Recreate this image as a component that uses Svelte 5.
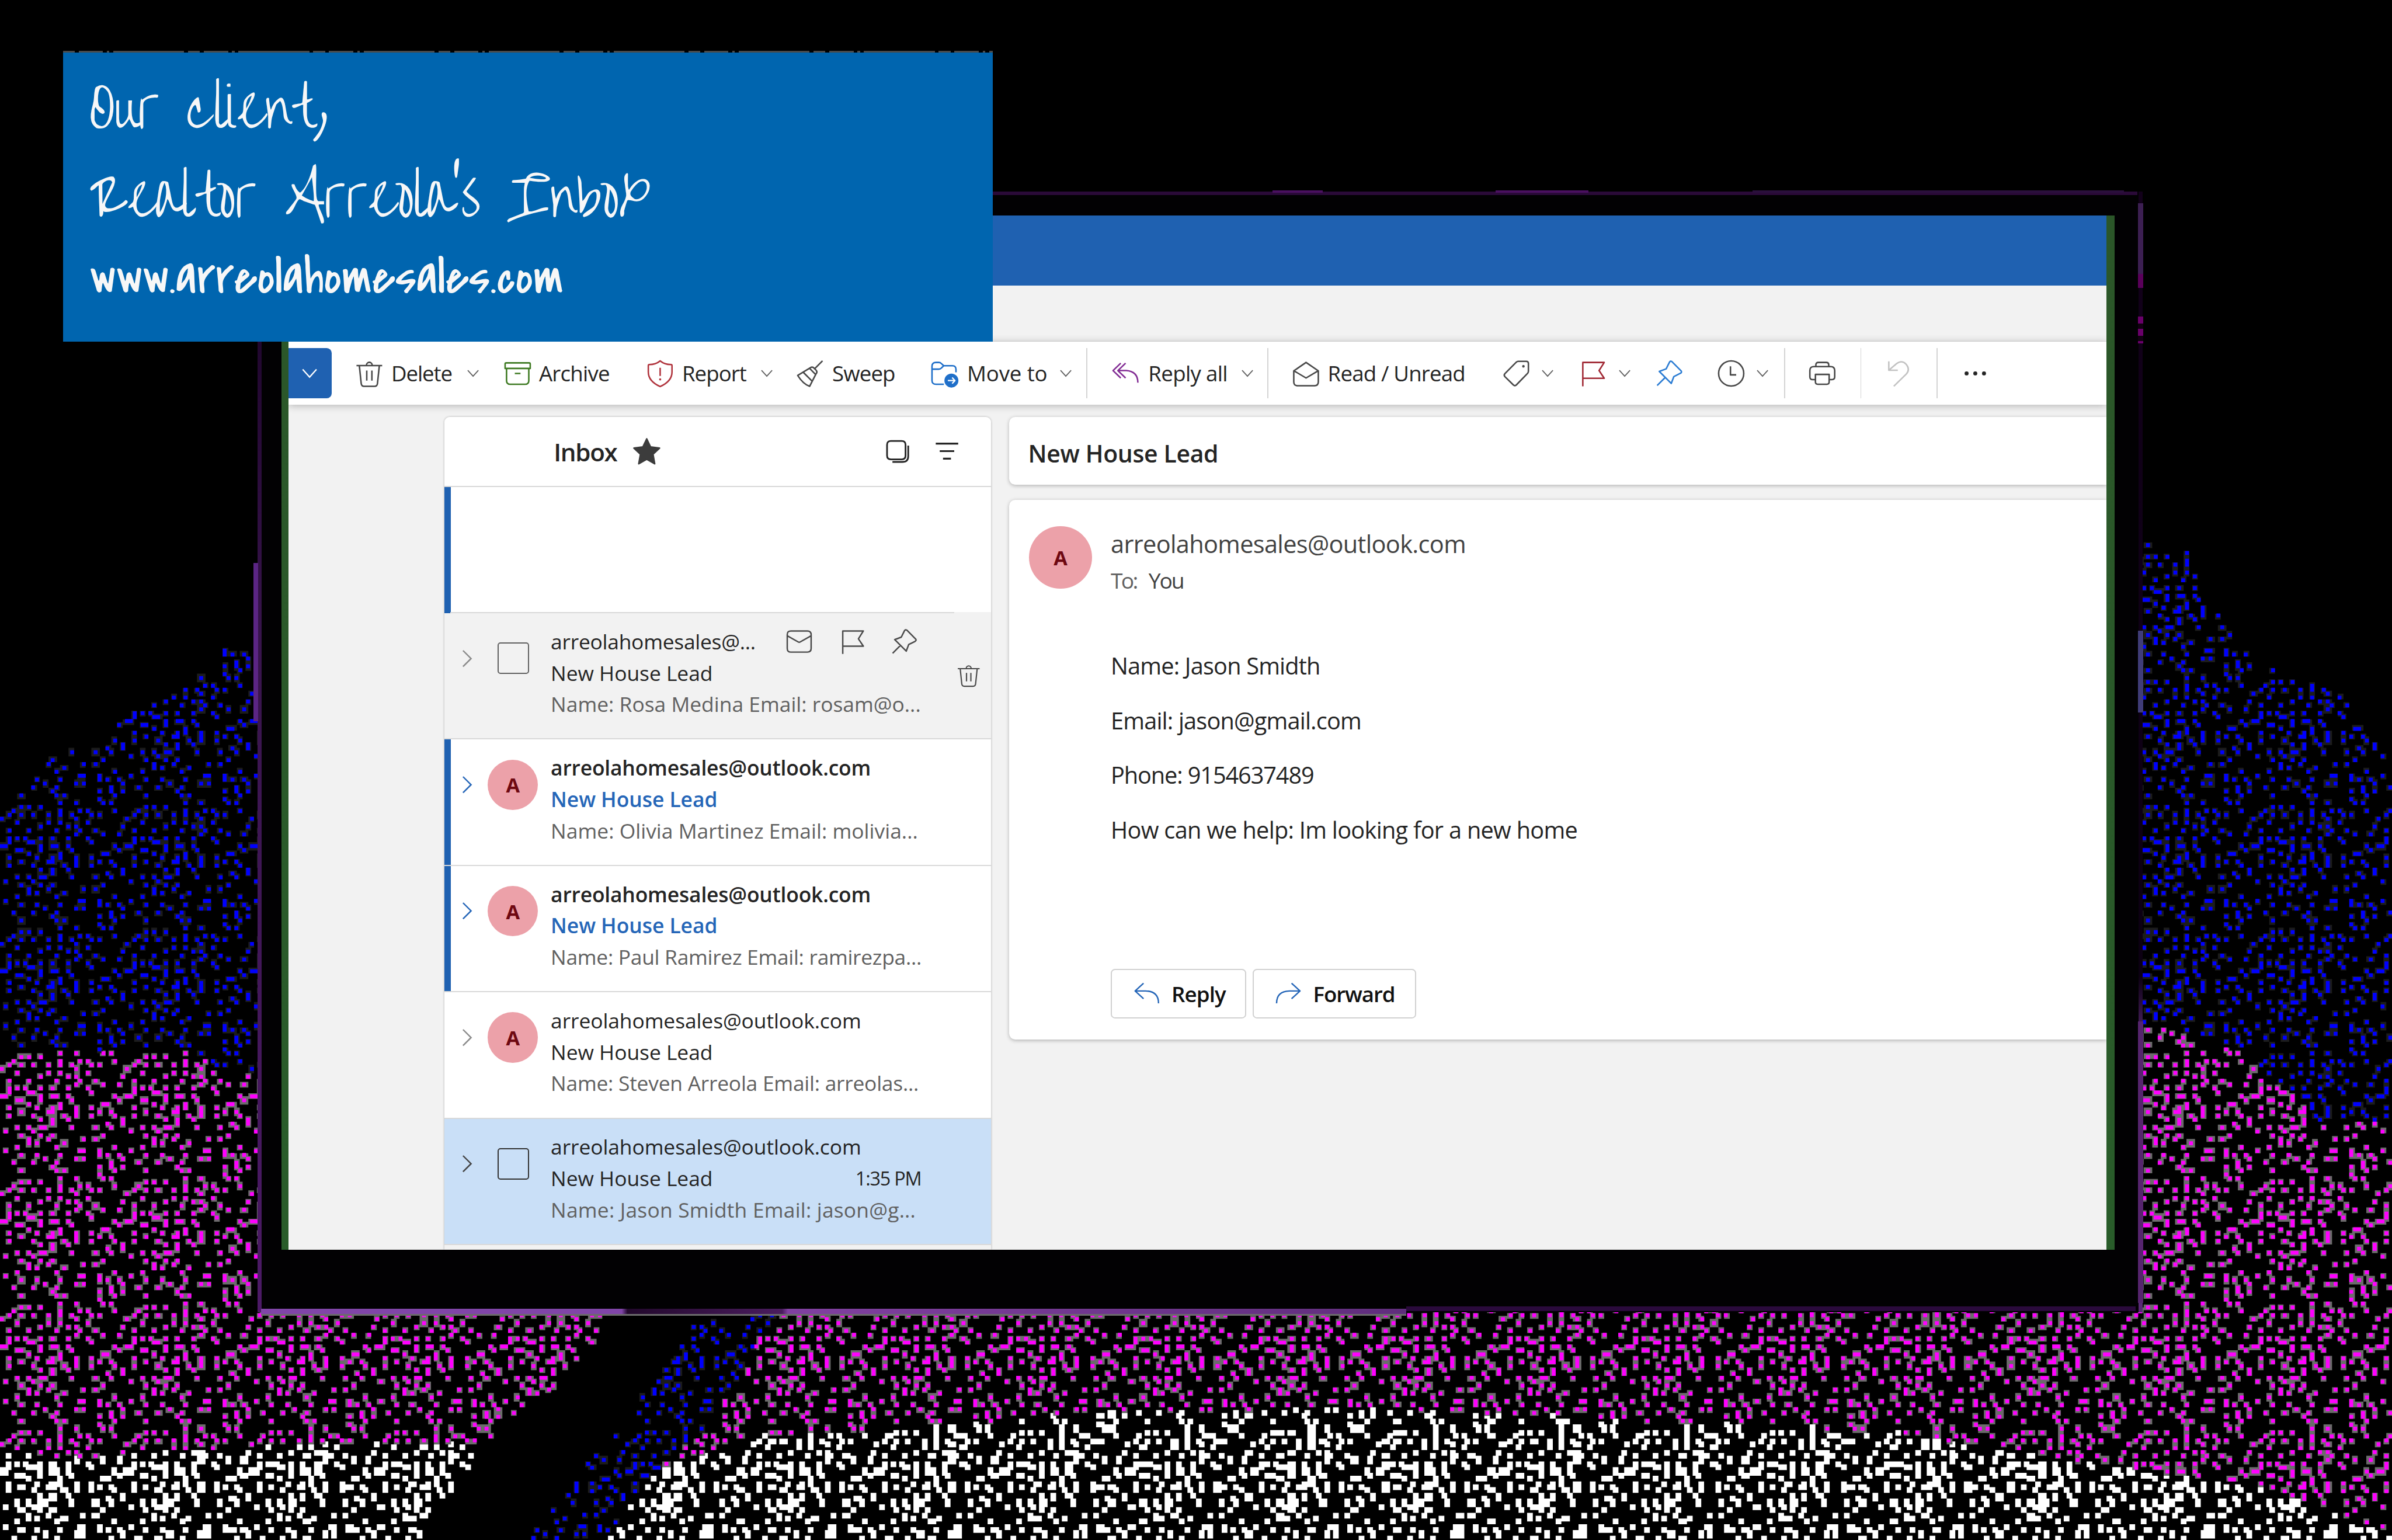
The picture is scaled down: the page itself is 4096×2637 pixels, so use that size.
<script>
  import { onMount } from 'svelte';

  // Layout is authored on a 6704-unit wide canvas; 1rem equals 100 units.
  const SCALE = 4096 / 6704;
  let canvas;

  // Spreads letters so a line of text fills the given width (in canvas units).
  function fit(node, width) {
    const natural = node.getBoundingClientRect().width;
    const count = node.textContent.length;
    node.style.letterSpacing = (width * SCALE - natural) / count + 'px';
  }

  // 32 x 32 repeating dither tile: filled columns for every row.
  const tile = [
    [15, 19, 26, 28], [5, 7, 10], [3, 15, 20, 22, 29], [2, 5, 8, 12, 15, 18, 23, 25],
    [0, 19], [4, 12, 15, 22], [10, 17, 19, 31], [2, 7, 14, 20, 24],
    [19, 26, 30], [2, 4, 6, 10, 13, 17, 22], [2, 7, 8, 23], [0, 1, 10, 13, 14, 17, 29],
    [4, 5, 10, 18, 30], [7, 15, 26, 27], [2, 9, 13, 15, 19, 23], [5, 12, 13, 19, 25, 28],
    [2, 8, 16, 19, 23, 29], [10, 13, 17, 31], [13, 27, 31], [4, 7, 10, 11, 18, 24, 28],
    [1, 8], [5, 10, 13, 26], [7, 12, 21, 24], [7, 9, 16],
    [4, 14, 29], [1, 20, 21, 25], [5, 9, 15, 25, 27, 30], [11, 19, 21, 31],
    [3, 8, 14, 28], [13, 25, 28, 31], [5, 14, 16, 29], [25]
  ];
  const CELL = 350.6 / 32;
  const TOP = 3297.2 - 350.6 * 8;

  const blueTop = [[0, 2262], [138, 2117], [310, 2070], [344, 2012], [425, 1970], [520, 1922], [626, 1812], [730, 1815], [900, 1815], [5990, 1505], [6135, 1535], [6167, 1665], [6238, 1740], [6302, 1845], [6423, 1895], [6564, 1940], [6622, 2020], [6704, 2105]];
  const pinkTop = [[0, 2960], [120, 2945], [520, 2938], [600, 2985], [730, 3000], [900, 3000], [5990, 2865], [6148, 2905], [6276, 2950], [6372, 3020], [6462, 3095], [6510, 3150], [6704, 3140]];
  const whiteTop = [[0, 4074], [220, 4086], [520, 4062], [900, 4044], [1300, 4044], [1700, 4180], [1940, 4085], [2130, 4025], [2560, 4010], [2740, 3985], [3074, 3958], [3500, 3952], [3850, 3942], [4275, 3967], [4700, 3985], [5304, 4012], [5510, 4045], [5850, 4100], [6000, 4118], [6200, 4140], [6300, 4165], [6420, 4195], [6600, 4262], [6704, 4310]];
  // Edges of the dark diagonal streak, as x positions by depth.
  const darkLeft = [[3680, 1698], [3739, 1690], [3817, 1610], [3937, 1505], [4046, 1365], [4156, 1285], [4316, 1165]];
  const blueLeft = [[3680, 2060], [3720, 1935], [3810, 1890], [3895, 1800], [4000, 1730], [4110, 1640], [4220, 1560], [4316, 1480]];
  const blueRight = [[3680, 2180], [3760, 2115], [3880, 2060], [3990, 1980], [4080, 1890], [4150, 1815], [4316, 1708]];

  function at(line, v) {
    for (let i = 1; i < line.length; i++) {
      const [a, p] = line[i - 1];
      const [b, q] = line[i];
      if (v <= b) return p + ((q - p) * (v - a)) / (b - a);
    }
    return line[line.length - 1][1];
  }

  function zone(x, y) {
    if (y > 3660 && x > at(darkLeft, y) && x < at(blueRight, y)) {
      return x > at(blueLeft, y) ? 'blue' : null;
    }
    if (y > at(whiteTop, x)) return 'white';
    if (y > at(pinkTop, x)) return 'pink';
    if (y > at(blueTop, x)) return 'blue';
    return null;
  }

  onMount(() => {
    const ctx = canvas.getContext('2d');
    ctx.scale(SCALE, SCALE);
    const halo = { blue: new Path2D(), pink: new Path2D(), white: new Path2D() };
    const core = { blue: new Path2D(), pink: new Path2D(), white: new Path2D() };
    const used = new Set();
    for (let r = 0; TOP + r * CELL < 4316; r++) {
      const y = TOP + r * CELL;
      for (let k = 0; k < 20; k++) {
        for (const c of tile[r % 32]) {
          const x = (k * 32 + c) * CELL - 0.4;
          const z = zone(x + 5, y + 5);
          if (!z) continue;
          core[z].rect(x, y, CELL, CELL);
          const x0 = Math.floor((x + 0.8) / 8), x1 = Math.ceil((x + CELL - 0.8) / 8);
          const y0 = Math.floor((y + 0.8) / 8), y1 = Math.ceil((y + CELL - 0.8) / 8);
          for (let j = y0; j < y1; j++) {
            for (let i = x0; i < x1; i++) {
              const key = j * 1000 + i;
              if (used.has(key)) continue;
              used.add(key);
              halo[z].rect(i * 8, j * 8, 8, 8);
            }
          }
        }
      }
    }
    const paint = (path, color) => { ctx.fillStyle = color; ctx.fill(path); };
    paint(halo.blue, '#1c1c1c');
    paint(halo.pink, '#6b6b6b');
    paint(halo.white, '#fff');
    paint(core.blue, '#0000ff');
    paint(core.pink, '#ff00ff');
  });

  const tools = [
    { icon: 'trash', lead: 66, w: 80, text: 'Delete', gap: 21, tw: 170, chev: 43 },
    { icon: 'archive', lead: 68, w: 80, text: 'Archive', gap: 20, tw: 198 },
    { icon: 'shield', lead: 101, w: 80, text: 'Report', gap: 22, tw: 180, chev: 41 },
    { icon: 'broom', lead: 65, w: 80, text: 'Sweep', gap: 22, tw: 176 },
    { icon: 'folder', lead: 99, w: 84, text: 'Move to', gap: 19, tw: 225, chev: 36 },
    { divider: true, lead: 40 },
    { icon: 'replyall', lead: 67, w: 80, text: 'Reply all', gap: 24, tw: 222, chev: 40 },
    { divider: true, lead: 39 },
    { icon: 'envelope', lead: 65, w: 80, text: 'Read / Unread', gap: 21, tw: 385 },
    { icon: 'tag', lead: 104, w: 80, chev: 30 },
    { icon: 'flag', lead: 72, w: 80, chev: 32 },
    { icon: 'pin', lead: 68, w: 80, chev: 0 },
    { icon: 'clock', lead: 94, w: 80, chev: 31 },
    { divider: true, lead: 44 },
    { icon: 'printer', lead: 64, w: 80 },
    { divider: true, lead: 67 },
    { icon: 'undo', lead: 64, w: 80 },
    { divider: true, lead: 67 },
    { icon: 'dots', lead: 65, w: 80 }
  ];

  const rows = [
    { hover: true, from: 'arreolahomesales@...', fw: 574, sw: 454, snippet: 'Name: Rosa Medina Email: rosam@o...', nw: 1037 },
    { unread: true, from: 'arreolahomesales@outlook.com', fw: 897, sw: 467, snippet: 'Name: Olivia Martinez Email: molivia...', nw: 1029 },
    { unread: true, from: 'arreolahomesales@outlook.com', fw: 897, sw: 467, snippet: 'Name: Paul Ramirez Email: ramirezpa...', nw: 1039 },
    { from: 'arreolahomesales@outlook.com', fw: 870, sw: 454, snippet: 'Name: Steven Arreola Email: arreolas...', nw: 1031 },
    { selected: true, from: 'arreolahomesales@outlook.com', fw: 870, sw: 454, snippet: 'Name: Jason Smidth Email: jason@g...', nw: 1023, time: '1:35 PM' }
  ];

  const body = [
    ['Name: Jason Smidth', 587],
    ['Email: jason@gmail.com', 702],
    ['Phone: 9154637489', 569],
    ['How can we help: Im looking for a new home', 1308]
  ];
</script>

{#snippet icon(name)}
  <svg class="ic {name}" viewBox="0 0 20 20" fill="none" stroke="currentColor" stroke-width="1.05" stroke-linejoin="round">
    {#if name === 'trash'}
      <path d="M1 4.5H19M8 4.2A2 2 0 0 1 12 4.2M3 4.6 4.3 17Q4.5 19 6.3 19H13.700Q15.500 19 15.700 17L17 4.600M8.200 8V15M11.800 8V15" />
    {:else if name === 'archive'}
      <path d="M2 2.600H18Q18.800 2.600 18.800 3.400V6.500H1.200V3.400Q1.200 2.600 2 2.600ZM2.200 6.700V15Q2.200 17.600 4.800 17.600H15.200Q17.800 17.600 17.800 15V6.700M8 10H12" />
    {:else if name === 'shield'}
      <path d="M10 1.200Q13 3.700 17.600 3.800Q18.300 3.800 18.300 4.600V9Q18.300 15.500 10 19.200Q1.700 15.500 1.700 9V4.600Q1.700 3.800 2.400 3.800Q7 3.700 10 1.200ZM10 6V11.800" />
      <circle cx="10" cy="14.200" r=".5" fill="currentColor" stroke-width=".5" />
    {:else if name === 'broom'}
      <path d="M18.600 1.200 12.700 7.100M9.800 6.200Q11.300 4.900 12.700 6.300L14 7.600Q15.300 9 14 10.400L9.600 19Q5 17.500 1.200 11.400ZM9.600 6.500 14 11M5.200 9.300 11.200 15.300" />
    {:else if name === 'folder'}
      <path d="M9.500 17.600H4Q1.200 17.600 1.200 15V5Q1.200 2.300 4 2.300H6Q7 2.300 7.700 3L9.400 4.600H15.500Q18 4.600 18 7.200V9.200M1.200 7H6Q7 7 7.700 6.300L9.400 4.600" />
      <circle cx="14.800" cy="15" r="4.900" fill="currentColor" stroke="none" />
      <path d="M12.300 15H17.200M15.300 12.900 17.300 15 15.300 17.100" stroke="#fff" stroke-width=".9" />
    {:else if name === 'replyall'}
      <path d="M6.600 2.800 1.200 8 6.600 13.200M10 2.800 4.600 8 10 13.200M4.600 8H10.500Q18.600 8.600 18.600 16.500" />
    {:else if name === 'envelope'}
      <path d="M1.400 8.200 10 2.300 18.600 8.200V16Q18.600 18.600 16 18.600H4Q1.400 18.600 1.400 16ZM1.600 8.200 10 13.200 18.400 8.200" />
    {:else if name === 'tag'}
      <path d="M11.300 1.500H17Q18.500 1.500 18.500 3V8.400Q18.500 9.300 17.900 10L10 18.100Q9 19 8 18.100L2 12.200Q1.100 11.200 2 10.200L10 2.100Q10.600 1.500 11.300 1.500Z" />
      <circle cx="15" cy="5" r=".6" fill="currentColor" stroke-width=".6" />
    {:else if name === 'flag'}
      <path d="M2.600 19V2.300H17.600L14 8 17.600 13.400H2.600" />
    {:else if name === 'pin'}
      <path d="M11.800 1.700 18.300 8.200Q19 9.200 17.800 9.900L13.200 12.200 11.400 17 3 8.600 7.800 6.800 10.100 2.200Q10.800 1 11.800 1.700ZM7.200 12.800 1.500 18.500" />
    {:else if name === 'clock'}
      <circle cx="10" cy="10" r="8.800" />
      <path d="M9.500 5V11H13.500" />
    {:else if name === 'printer'}
      <path d="M5.500 5.200V4Q5.500 2.300 7.200 2.300H12.800Q14.500 2.300 14.500 4V5.200M5.200 14.300H3.200Q1.300 14.300 1.300 12.400V8Q1.300 5.200 4.100 5.200H15.900Q18.700 5.200 18.700 8V12.400Q18.700 14.300 16.800 14.300H14.800M5.200 10.700H14.800V16Q14.800 17.600 13.200 17.600H6.800Q5.200 17.600 5.200 16Z" />
    {:else if name === 'undo'}
      <path d="M3 1.500V7.800H9.300M3.200 7.600 8.400 3.200Q12 .4 15 3.400Q18.200 7 15.300 10.400L6.500 19" />
    {:else if name === 'dots'}
      <g fill="currentColor" stroke="none"><circle cx="3.900" cy="10" r="1.400" /><circle cx="10" cy="10" r="1.400" /><circle cx="16.100" cy="10" r="1.400" /></g>
    {:else if name === 'mail'}
      <path d="M4 2.300H16Q18.700 2.300 18.700 5V15Q18.700 17.700 16 17.700H4Q1.300 17.700 1.300 15V5Q1.300 2.300 4 2.300ZM1.300 5.800 9.300 10.300Q10 10.700 10.700 10.300L18.700 5.800" />
    {:else if name === 'star'}
      <path fill="currentColor" d="M10 1 12.700 6.700 19 7.500 14.400 11.800 15.600 18.500 10 15.300 4.400 18.500 5.600 11.800 1 7.500 7.300 6.700Z" />
    {:else if name === 'select'}
      <path stroke-width="1.300" d="M4.800 1.900H13.200Q16.200 1.900 16.200 4.900V13.200Q16.200 16.200 13.200 16.200H4.800Q1.800 16.200 1.800 13.200V4.900Q1.800 1.900 4.800 1.900ZM18.300 5.500V13.600Q18.300 18.200 13.700 18.200H6" />
    {:else if name === 'filter'}
      <path stroke-width="1.400" d="M1.500 3.800H18.500M4.500 9.500H15.500M7 15.200H13" />
    {:else if name === 'reply'}
      <path d="M7.500 2 1.200 7.800 7.500 13.600M1.400 7.800H9Q18.700 8 18.700 17" />
    {:else if name === 'forward'}
      <path d="M12.500 2 18.800 7.800 12.500 13.600M18.600 7.800H11Q1.300 8 1.300 17" />
    {/if}
  </svg>
{/snippet}

{#snippet chevron(dir)}
  <svg class="chev {dir}" viewBox="0 0 20 20" fill="none" stroke="currentColor" stroke-width="1.800"><path d={dir === 'next' ? 'M5 0 15 10 5 20' : 'M1 5 10 15 19 5'} /></svg>
{/snippet}

<div class="stage">
  <canvas bind:this={canvas} width="4096" height="2637"></canvas>

  <div class="monitor">
    <i class="edge top"></i><i class="edge left"></i><i class="edge leftglow"></i><i class="edge right"></i>
    <i class="edge bottom"></i><i class="edge bottomdark"></i>
    <i class="edge r1"></i><i class="edge r2"></i><i class="edge r3"></i><i class="edge r4"></i><i class="edge r5"></i>
    <i class="edge t1"></i><i class="edge t2"></i><i class="edge t3"></i>
    <div class="screen">
      <div class="appbar"></div>
      <div class="tabs"></div>
      <div class="toolbar">
        <div class="new">{@render chevron('down')}</div>
        {#each tools as t}
          {#if t.divider}
            <span class="divider" style:margin-left="{t.lead / 100}rem"></span>
          {:else}
            <span class="tool" style:margin-left="{t.lead / 100}rem">
              <span class="slot tone-{t.icon}" style:width="{t.w / 100}rem">{@render icon(t.icon)}</span>
              {#if t.text}
                <span class="label" style:width="{t.tw / 100}rem" style:margin-left="{t.gap / 100}rem"><span use:fit={t.tw}>{t.text}</span></span>
              {/if}
              {#if t.chev}
                <span class="drop" style:margin-left="{t.chev / 100}rem">{@render chevron('down')}</span>
              {/if}
            </span>
          {/if}
        {/each}
      </div>
      <div class="work">
        <section class="list">
          <header>
            <span class="title"><span use:fit={177}>Inbox</span></span>
            {@render icon('star')}
            <span class="grow"></span>
            {@render icon('select')}
            {@render icon('filter')}
          </header>
          <div class="row blank unread"></div>
          {#each rows as r}
            <div class="row" class:unread={r.unread} class:hover={r.hover} class:selected={r.selected}>
              <span class="expand">{@render chevron('next')}</span>
              <span class="who">
                {#if r.hover || r.selected}<span class="check"></span>{:else}<span class="avatar">A</span>{/if}
              </span>
              <div class="lines">
                <div class="line from">
                  <span use:fit={r.fw}>{r.from}</span>
                  {#if r.hover}
                    <span class="actions">{@render icon('mail')}{@render icon('flag')}{@render icon('pin')}</span>
                  {/if}
                </div>
                <div class="line subject">
                  <span use:fit={r.sw}>New House Lead</span>
                  {#if r.time}<span class="time"><span use:fit={184}>{r.time}</span></span>{/if}
                </div>
                <div class="line snippet"><span use:fit={r.nw}>{r.snippet}</span></div>
              </div>
              {#if r.hover}<span class="bin">{@render icon('trash')}</span>{/if}
            </div>
          {/each}
        </section>
        <section class="reading">
          <div class="card subjectcard"><span use:fit={533}>New House Lead</span></div>
          <div class="card message">
            <span class="avatar big">A</span>
            <div class="content">
              <div class="sender"><span use:fit={995}>arreolahomesales@outlook.com</span></div>
              <div class="to"><span class="tolabel"><span use:fit={73}>To:</span></span><span use:fit={98}>You</span></div>
              <div class="text">
                {#each body as [line, w]}
                  <p><span use:fit={w}>{line}</span></p>
                {/each}
              </div>
              <div class="buttons">
                <button class="b-reply">{@render icon('reply')}<span use:fit={152}>Reply</span></button>
                <button class="b-forward">{@render icon('forward')}<span use:fit={229}>Forward</span></button>
              </div>
            </div>
          </div>
        </section>
      </div>
    </div>
  </div>

  <div class="banner">
    <div class="hand one"><span use:fit={672}>Our client,</span></div>
    <div class="hand two"><span use:fit={1570}>Realtor Arreola's Inbox</span></div>
    <div class="hand three"><span use:fit={1328}>www.arreolahomesales.com</span></div>
  </div>
</div>

<style>
  :global(html) { font-size: 61.098px; }
  :global(body) { margin: 0; background: #000; overflow: hidden; }
  .stage {
    position: relative; width: 67.04rem; height: 43.16rem; overflow: hidden; background: #000;
    font-family: "Segoe UI", "Open Sans", "Noto Sans", sans-serif; color: #242424; white-space: nowrap;
  }
  canvas { position: absolute; left: 0; top: 0; width: 4096px; height: 2637px; }
  svg { display: block; overflow: visible; flex: none; }
  .ic { width: .8rem; height: .8rem; }
  .chev { width: .33rem; height: .33rem; }
  .chev.next { width: .45rem; height: .45rem; }

  /* Monitor and bezel */
  .monitor {
    position: absolute; left: 7.22rem; top: 5.37rem; width: 52.83rem; height: 31.4rem;
    background: #020103; border-radius: .1rem;
  }
  .edge { position: absolute; }
  .top { left: 0; right: .15rem; top: 0; height: .09rem; background: #2a0a38; }
  .left { left: 0; top: 0; bottom: 0; width: .12rem; background: linear-gradient(#150020, #38144c 40%, #4c1a66); }
  .leftglow { left: -.11rem; top: 10.4rem; width: .12rem; height: 4.45rem; background: #5b2584; }
  .right { right: 0; top: 0; bottom: 0; width: .12rem; background: linear-gradient(#12001a, #0c0012 70%, #4a2060 75%, #5a2a78); }
  .bottom { left: .1rem; width: 32.1rem; bottom: -.1rem; border-bottom: .05rem solid #6b6b6b; box-sizing: border-box; height: .19rem; background: linear-gradient(90deg, #8045a8 0 31.500%, #22082c 32% , #4a1c5e 45.500%, #8040a0 46%, #5f2d7c); }
  .bottomdark { left: 32.2rem; right: .2rem; bottom: .02rem; height: .13rem; background: #2a0a3c; }
  .r1, .r2, .r3, .r4, .r5 { left: 52.7rem; width: .14rem; }
  .r1 { top: .33rem; height: 2rem; background: #3c1f52; }
  .r2 { top: 2.3rem; height: .4rem; background: #5a005a; }
  .r3 { top: 3.5rem; height: .75rem; background: repeating-linear-gradient(#6a006a 0 .2rem, #120012 .2rem .34rem); }
  .r4 { top: 12.3rem; height: 2.3rem; background: #403c78; }
  .r5 { top: 23.25rem; height: 7.9rem; background: #56246e; }
  .t1, .t2, .t3 { top: -.04rem; height: .07rem; background: #4a1060; }
  .t1 { left: 28.45rem; width: 1.4rem; }
  .t2 { left: 34.7rem; width: 2.6rem; }
  .t3 { left: 41.9rem; width: 10.4rem; background: #2a0f3c; }

  .screen {
    position: absolute; left: .67rem; top: .67rem; width: 51.37rem; height: 28.98rem; box-sizing: border-box;
    border: solid; border-width: 0 .24rem 0 .21rem; border-image: linear-gradient(#2b5629, #295c2a) 1;
    background: #f2f2f2; overflow: hidden; display: flex; flex-direction: column;
  }
  .appbar { height: 1.97rem; background: #1f61b1; flex: none; }
  .tabs { height: 1.57rem; box-sizing: border-box; border-bottom: .03rem solid #e2e2e2; flex: none; }
  .toolbar {
    height: 1.76rem; flex: none; background: #fff; display: flex; align-items: center; position: relative;
    box-shadow: 0 .03rem .22rem rgba(0, 0, 0, .28); box-sizing: border-box;
  }
  .new {
    width: 1.21rem; height: 1.4rem; background: #1f61b1; border-radius: 0 .14rem .14rem 0; color: #fff; flex: none;
    display: flex; align-items: center; padding-left: .37rem; box-sizing: border-box;
  }
  .new .chev { width: .43rem; height: .43rem; }
  .tool { display: flex; align-items: center; flex: none; }
  .slot { display: block; flex: none; color: #484848; }
  .label { font-size: .6rem; line-height: .8rem; flex: none; color: #242424; }
  .drop { color: #606060; width: .33rem; }
  .divider { width: .03rem; height: 1.4rem; background: #d4d4d4; flex: none; }
  .tone-archive { color: #3e7a22; }
  .tone-shield { color: #b0333c; }
  .tone-folder { color: #1f6fc9; }
  .tone-replyall { color: #822c94; }
  .tone-flag { color: #a02834; }
  .tone-pin { color: #2b7cd3; }
  .tone-undo { color: #c2c2c2; }
  .tone-dots { color: #242424; }

  .work { flex: 1; display: flex; padding: .34rem 0 0 4.375rem; gap: .515rem; min-height: 0; }

  /* Message list */
  .list {
    width: 15.31rem; flex: none; background: #f2f2f2; border-radius: .15rem .15rem 0 0; overflow: hidden;
    box-shadow: 0 0 .06rem rgba(0, 0, 0, .3);
  }
  .list header {
    height: 1.965rem; box-sizing: border-box; border-bottom: .035rem solid #d8d8d8; background: #fff;
    display: flex; align-items: center; padding: .02rem .86rem 0 3.06rem;
  }
  .title { width: 1.75rem; font-size: .69rem; line-height: 1rem; font-weight: 600; }
  .star { color: #3c3c3c; margin-left: .45rem; }
  .grow { flex: 1; }
  .select { width: .72rem; height: .72rem; margin-right: .66rem; }
  .filter { width: .74rem; height: .74rem; }
  .row {
    height: 3.542rem; box-sizing: border-box; border-bottom: .035rem solid #d9d9d9; background: #fff;
    display: flex; align-items: flex-start; position: relative;
  }
  .row.unread { box-shadow: inset .18rem 0 0 #1f61b1; }
  .row.blank { border-image: linear-gradient(90deg, #1f61b1 0 1.18%, #d9d9d9 1.18% 93.2%, #f2f2f2 93.2%) 1; }
  .row.hover { background: #f2f2f2; }
  .row.selected { background: #c9dff7; }
  .expand { width: 1.21rem; padding: 1.04rem 0 0 .41rem; box-sizing: border-box; color: #8a8a8a; flex: none; }
  .unread .expand { color: #2566b8; }
  .selected .expand { color: #444; }
  .who { width: 1.765rem; flex: none; height: 2.53rem; display: flex; align-items: center; }
  .avatar {
    width: 1.41rem; height: 1.41rem; border-radius: 50%; background: #eca1a9; color: #6e0811; font-weight: 700;
    font-size: .56rem; display: flex; align-items: center; justify-content: center; flex: none;
  }
  .check { width: .88rem; height: .88rem; margin-left: .27rem; box-sizing: border-box; border: .045rem solid #616161; border-radius: .08rem; }
  .selected .check { border-color: #333; }
  .lines { padding-top: .355rem; width: 10.4rem; flex: none; }
  .line { height: .88rem; line-height: .88rem; font-size: .58rem; display: flex; align-items: center; position: relative; }
  .snippet { color: #616161; }
  .unread .from, .unread .subject { font-weight: 600; }
  .unread .subject { color: #2566b8; }
  .time { margin-left: auto; font-size: .53rem; padding-right: .02rem; }
  .actions { margin-left: auto; display: flex; align-items: center; gap: .7rem; padding: 0 .1rem 0 0; color: #4a4a4a; }
  .actions .ic { width: .77rem; height: .77rem; }
  .actions .flag { margin: 0 -.02rem 0 .04rem; }
  .bin { color: #4a4a4a; padding-top: 1.34rem; margin-left: .98rem; }
  .bin .ic { width: .68rem; height: .8rem; }

  /* Reading pane */
  .reading { flex: 1; display: flex; flex-direction: column; gap: .43rem; }
  .card { background: #fff; border-radius: .17rem 0 0 .17rem; box-shadow: 0 .03rem .1rem rgba(0, 0, 0, .25); box-sizing: border-box; }
  .subjectcard { height: 1.9rem; padding-left: .53rem; line-height: 2.03rem; font-size: .67rem; font-weight: 600; }
  .message { height: 15.13rem; display: flex; padding: .73rem 0 0 .56rem; }
  .big { width: 1.76rem; height: 1.76rem; }
  .content { margin-left: .525rem; }
  .sender { height: 1rem; line-height: 1rem; font-size: .68rem; color: #424242; }
  .to { height: 1rem; line-height: 1.05rem; font-size: .61rem; color: #424242; display: flex; }
  .tolabel { width: 1.06rem; color: #616161; }
  .text { padding-top: 1.17rem; height: 9.25rem; }
  p { margin: 0; height: 1.53rem; line-height: 1.53rem; font-size: .65rem; }
  .buttons { display: flex; gap: .18rem; }
  button {
    height: 1.39rem; box-sizing: border-box; border: .04rem solid #d1d1d1; border-radius: .12rem; background: #fff;
    display: flex; align-items: center; font: inherit; font-size: .6rem; font-weight: 600; color: #111; padding: 0 0 0 .6rem; gap: .32rem;
  }
  .b-reply { width: 3.79rem; }
  .b-forward { width: 4.59rem; }
  button .ic { width: .75rem; height: .75rem; color: #2566b8; }

  /* Banner */
  .banner {
    position: absolute; left: 1.77rem; top: 1.47rem; width: 26.05rem; height: 8.1rem; background: #0065af;
    color: #f7f7f7; box-sizing: border-box; padding: .02rem 0 0 .74rem;
  }
  .banner::before {
    content: ""; position: absolute; left: 0; right: 0; top: -.04rem; height: .05rem;
    background: repeating-linear-gradient(90deg, #4a4a4a 0 .33rem, #000 .33rem .44rem, #4a4a4a .44rem 1.12rem, #000 1.12rem 1.23rem, #4a4a4a 1.23rem 1.3rem, #000 1.3rem 1.41rem, #4a4a4a 1.41rem 3.395rem, #000 3.395rem 3.506rem);
  }
  .hand { font-family: "Over the Rainbow", "Reenie Beanie", Lato, sans-serif; }
  .one { font-size: 1.53rem; height: 2.48rem; line-height: 3.1rem; }
  .two { font-size: 1.53rem; height: 2.33rem; line-height: 3.1rem; }
  .three { font-family: "Covered By Your Grace", "Reenie Beanie", Lato, sans-serif; font-size: 1.5rem; line-height: 2.95rem; }
</style>
